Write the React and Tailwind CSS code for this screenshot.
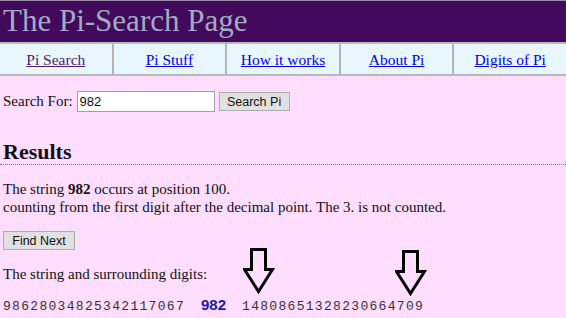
const navLinks = [
  { label: 'Pi Search', visited: true },
  { label: 'Pi Stuff' },
  { label: 'How it works' },
  { label: 'About Pi' },
  { label: 'Digits of Pi' },
]

function DownArrow({ className }) {
  return (
    <svg className={className} width="32" height="46" viewBox="0 0 32 46" fill="none">
      <path d="M8.5 1.5 H22.5 V21.5 H29.5 L15.5 43.5 L1.5 21.5 H8.5 Z" stroke="#000" strokeWidth="3" strokeLinejoin="miter" />
    </svg>
  )
}

export default function App() {
  return (
    <div className="relative w-[566px] h-[318px] overflow-hidden bg-[#ffddff] font-['Liberation_Serif',serif] text-[#111]">
      {/* Title bar */}
      <div className="h-[42px] bg-[#410a5b] border-t border-[#9a8aa8] pl-[3px] flex items-center">
        <h1 className="text-[31px] leading-none text-[#a4aac4] -mt-[2px]">The Pi-Search Page</h1>
      </div>

      {/* Nav */}
      <div className="flex h-[34px] bg-[#e8f6fe] border-y-2 border-[#b8b8b8]">
        {navLinks.map((l, i) => (
          <div
            key={l.label}
            className={`flex-1 flex items-center justify-center pt-[1px] text-[15.5px] ${i > 0 ? 'border-l-2 border-[#b4b4b4]' : ''}`}
          >
            <a href="#" className={`underline ${l.visited ? 'text-[#551a6b]' : 'text-[#0000ee]'}`}>{l.label}</a>
          </div>
        ))}
      </div>

      {/* Search form */}
      <div className="flex items-center pl-[3px] mt-[14px] text-[15px]">
        <span>Search For:</span>
        <input
          defaultValue="982"
          className="ml-[4px] w-[138px] h-[21px] border border-[#a0a0a0] bg-white px-[2px] text-[13px] font-['Liberation_Sans',sans-serif] outline-none"
        />
        <button className="ml-[4px] w-[71px] h-[19px] border border-[#adadad] bg-[#e1e1e1] text-[12.5px] font-['Liberation_Sans',sans-serif] text-[#111]">
          Search Pi
        </button>
      </div>

      {/* Results */}
      <h2 className="mt-[26px] pl-[3px] text-[22px] font-bold leading-[25px]">Results</h2>
      <div className="border-b border-dotted border-[#e05060]" />

      <p className="mt-[15px] pl-[3px] text-[15px] leading-[18px]">
        The string <b>982</b> occurs at position 100.
        <br />
        counting from the first digit after the decimal point. The 3. is not counted.
      </p>

      <button className="ml-[3px] mt-[15px] w-[72px] h-[19px] border border-[#adadad] bg-[#e1e1e1] text-[12.5px] font-['Liberation_Sans',sans-serif] text-[#111] block">
        Find Next
      </button>

      <p className="mt-[15px] pl-[3px] text-[15px] leading-[18px]">The string and surrounding digits:</p>

      <div className="mt-[11px] pl-[3px] flex items-baseline font-['Liberation_Mono',monospace] text-[13px] tracking-[1.3px] text-[#333]">
        <span>98628034825342117067</span>
        <span className="ml-[16px] mr-[16px] font-['Liberation_Sans',sans-serif] font-bold text-[15px] tracking-normal text-[#1a1aa8]">982</span>
        <span>14808651328230664709</span>
      </div>

      <DownArrow className="absolute left-[243px] top-[248px]" />
      <DownArrow className="absolute left-[395px] top-[250px]" />
    </div>
  )
}
